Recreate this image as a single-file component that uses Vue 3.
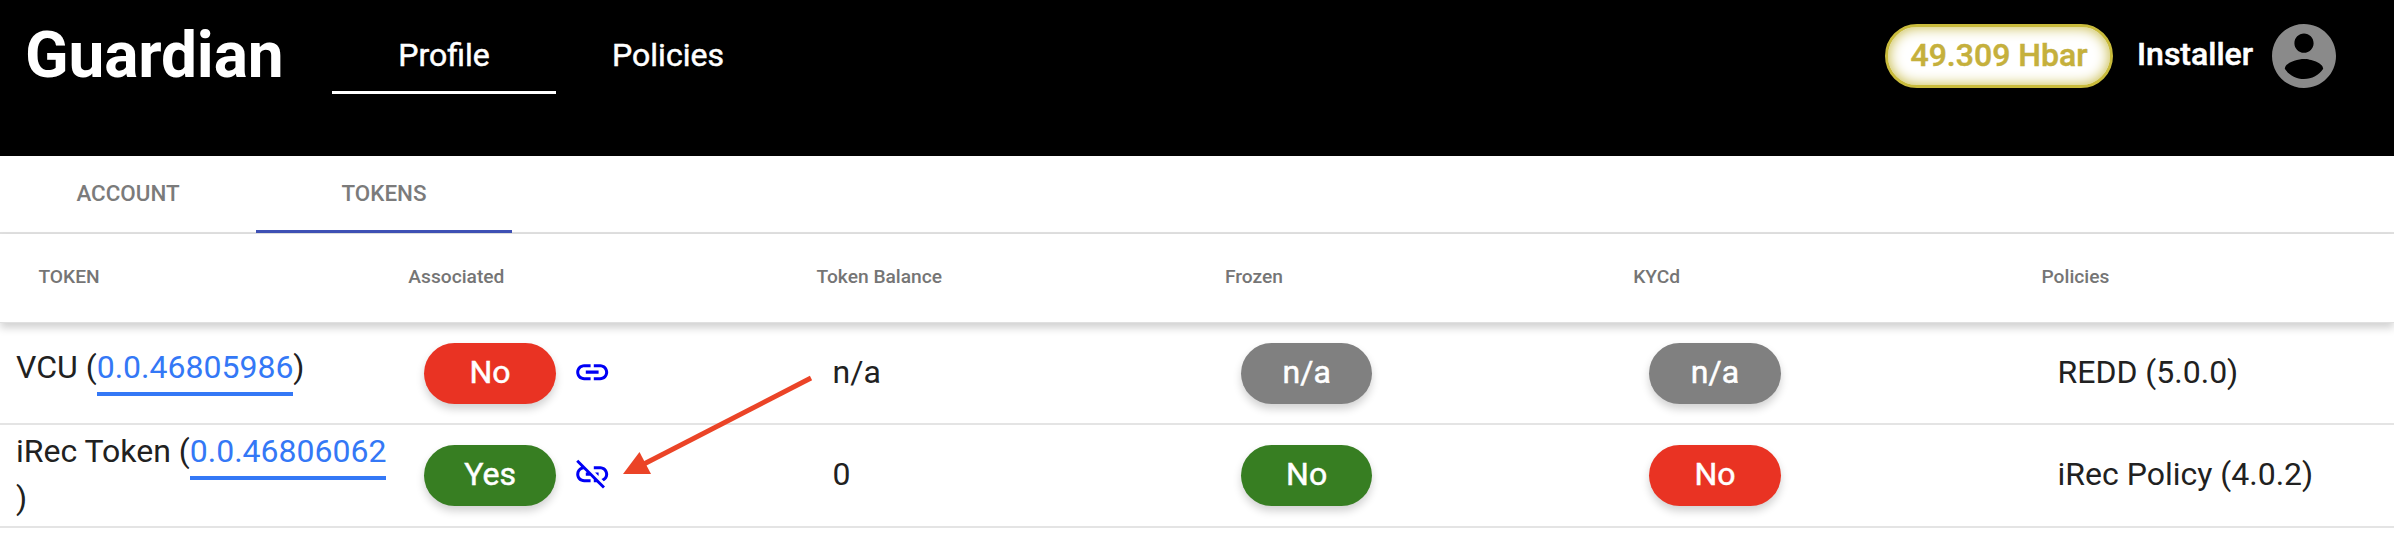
<script setup>
const tabs = ['Account', 'Tokens']
const headings = ['TOKEN', 'Associated', 'Token Balance', 'Frozen', 'KYCd', 'Policies']
const rows = [
  { name: 'VCU', id: '0.0.46805986', associated: 'No', assocTone: 'red', linked: false, balance: 'n/a', frozen: 'n/a', frozenTone: 'gray', kyc: 'n/a', kycTone: 'gray', policy: 'REDD (5.0.0)' },
  { name: 'iRec Token', id: '0.0.46806062', associated: 'Yes', assocTone: 'green', linked: true, balance: '0', frozen: 'No', frozenTone: 'green', kyc: 'No', kycTone: 'red', policy: 'iRec Policy (4.0.2)' },
]
</script>

<template>
  <div class="page">
    <header class="topbar">
      <div class="brand">Guardian</div>
      <nav class="nav">
        <a class="nav-item active">Profile</a>
        <a class="nav-item">Policies</a>
      </nav>
      <div class="user">
        <div class="balance">49.309 Hbar</div>
        <div class="user-name">Installer</div>
        <svg class="avatar" viewBox="2 2 20 20"><path d="M12 2C6.48 2 2 6.48 2 12s4.48 10 10 10 10-4.48 10-10S17.52 2 12 2zm0 3c1.66 0 3 1.34 3 3s-1.34 3-3 3-3-1.34-3-3 1.34-3 3-3zm0 14.2c-2.5 0-4.71-1.28-6-3.22.03-1.99 4-3.08 6-3.08 1.99 0 5.97 1.09 6 3.08-1.29 1.94-3.5 3.22-6 3.22z" /></svg>
      </div>
    </header>

    <div class="tabs">
      <div v-for="t in tabs" :key="t" class="tab" :class="{ selected: t === 'Tokens' }"><span>{{ t }}</span></div>
    </div>

    <div class="grid head">
      <div v-for="h in headings" :key="h" class="th">{{ h }}</div>
    </div>

    <div v-for="r in rows" :key="r.id" class="grid row">
      <div class="td token" :class="{ single: !r.linked }"><div>{{ r.name }} (<a class="token-id">{{ r.id }}</a><wbr>)</div></div>
      <div class="td">
        <span class="pill" :class="r.assocTone"><span>{{ r.associated }}</span></span>
        <svg class="link-icon" viewBox="0 0 24 24">
          <path v-if="r.linked" d="M17 7h-4v1.9h4c1.71 0 3.1 1.39 3.1 3.1 0 1.43-.98 2.63-2.31 2.98l1.46 1.46C20.88 15.61 22 13.95 22 12c0-2.76-2.24-5-5-5zm-1 4h-2.19l2 2H16v-2zM2 4.27l3.11 3.11C3.29 8.12 2 9.91 2 12c0 2.76 2.24 5 5 5h4v-1.9H7c-1.71 0-3.1-1.39-3.1-3.1 0-1.59 1.21-2.9 2.76-3.07L8.73 11H8v2h2.73L13 15.27V17h1.73l4.01 4L20 19.74 3.27 3 2 4.27z" />
          <path v-else d="M3.9 12c0-1.71 1.39-3.1 3.1-3.1h4V7H7c-2.76 0-5 2.24-5 5s2.24 5 5 5h4v-1.9H7c-1.71 0-3.1-1.39-3.1-3.1zM8 13h8v-2H8v2zm9-6h-4v1.9h4c1.71 0 3.1 1.39 3.1 3.1s-1.39 3.1-3.1 3.1h-4V17h4c2.76 0 5-2.24 5-5s-2.24-5-5-5z" />
        </svg>
      </div>
      <div class="td text">{{ r.balance }}</div>
      <div class="td"><span class="pill" :class="r.frozenTone"><span>{{ r.frozen }}</span></span></div>
      <div class="td"><span class="pill" :class="r.kycTone"><span>{{ r.kyc }}</span></span></div>
      <div class="td text">{{ r.policy }}</div>
    </div>

    <svg class="pointer" width="200" height="110" viewBox="0 0 200 110">
      <path d="M191 8L22 95" stroke="#eb4427" stroke-width="5" fill="none" />
      <path d="M3 104L19.5 82L31 104Z" fill="#eb4427" />
    </svg>
  </div>
</template>

<style>
body { margin: 0; overflow: hidden; background: #fff; }
</style>

<style scoped>
.page {
  position: relative;
  width: 2394px;
  height: 538px;
  overflow: hidden;
  box-sizing: border-box;
  background: #fff;
  font-family: Roboto, "Liberation Sans", sans-serif;
  font-size: 32px;
  color: #212121;
}
.page * { box-sizing: border-box; }
.topbar {
  display: flex;
  align-items: flex-start;
  height: 156px;
  padding-left: 25px;
  background: #000;
  color: #fff;
}
.brand {
  width: 307px;
  font-size: 64px;
  font-weight: 700;
  letter-spacing: -0.15px;
  line-height: 111px;
  white-space: nowrap;
}
.nav { display: flex; }
.nav-item {
  width: 224px;
  height: 94px;
  line-height: 73px;
  padding-top: 19px;
  text-align: center;
  font-weight: 400;
  -webkit-text-stroke: 0.5px currentColor;
}
.nav-item.active { border-bottom: 3px solid #fff; }
.user {
  display: flex;
  margin-left: auto;
  padding: 24px 58px 0 0;
  font-weight: 500;
}
.balance {
  width: 228px;
  height: 64px;
  line-height: 56px;
  border: 3px solid #c9bb3c;
  border-radius: 32px;
  background: #fff;
  box-shadow: inset 0 0 14px #c4b63c;
  color: #c5b03c;
  text-align: center;
  font-weight: 500;
  -webkit-text-stroke: 0.5px currentColor;
  white-space: nowrap;
}
.user-name {
  width: 135px;
  margin-left: 24px;
  line-height: 60px;
  -webkit-text-stroke: 0.5px currentColor;
}
.avatar { width: 64px; height: 64px; fill: #8a8a8a; }
.tabs {
  display: flex;
  height: 78px;
  border-bottom: 2px solid #e0e0e0;
}
.tab {
  width: 256px;
  height: 77px;
  line-height: 75px;
  text-align: center;
  font-size: 22.4px;
  font-weight: 500;
  color: #7b7b7b;
  text-transform: uppercase;
}
.tab.selected { border-bottom: 3px solid #3f51b5; }
.grid {
  display: grid;
  grid-template-columns: repeat(5, 408.3px) 1fr;
}
.head {
  position: relative;
  height: 89.2px;
  border-bottom: 1px solid #e0e0e0;
  box-shadow: 0 5px 8px rgba(0, 0, 0, 0.18);
}
.th {
  line-height: 86px;
  font-size: 19.2px;
  font-weight: 500;
  color: #757575;
}
.th:first-child { padding-left: 38.4px; }
.row {
  height: 102.2px;
  border-bottom: 2px solid #e4e4e4;
}
.td {
  display: flex;
  align-items: center;
  padding: 0 16px;
  white-space: nowrap;
}
.text { padding-bottom: 2px; }
.token { line-height: 47px; white-space: normal; padding-bottom: 1px; }
.token.single { padding-bottom: 11px; }
.token-id { color: #3478f6; border-bottom: 4px solid #3478f6; padding-bottom: 6px; }
.pill {
  display: flex;
  align-items: center;
  justify-content: center;
  width: 131.5px;
  height: 61px;
  padding-bottom: 2px;
  border-radius: 31px;
  color: #fff;
  font-weight: 400;
  -webkit-text-stroke: 0.5px currentColor;
  box-shadow: 0 5px 8px rgba(0, 0, 0, 0.18);
}
.red { background: #e93323; }
.green { background: #377e22; }
.gray { background: #808080; }
.link-icon {
  width: 38.4px;
  height: 38.4px;
  margin: 0 0 3px 17.5px;
  fill: #0000f5;
}
.pointer { position: absolute; left: 620px; top: 370px; }
</style>
